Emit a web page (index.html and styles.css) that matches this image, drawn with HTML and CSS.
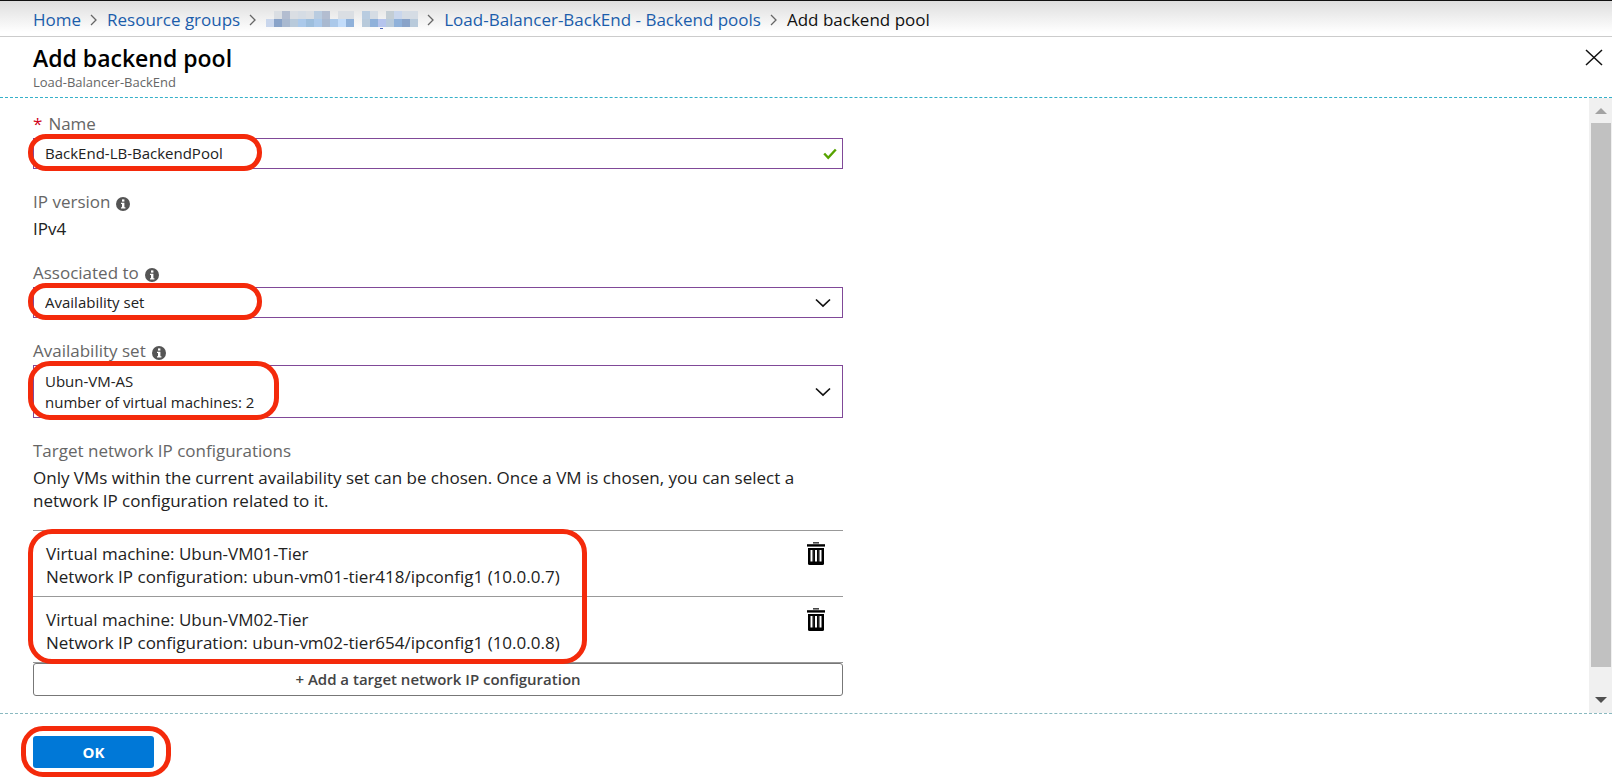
FILE: index.html
```html
<!DOCTYPE html>
<html lang="en">
<head>
<meta charset="utf-8">
<title>Add backend pool</title>
<link rel="stylesheet" href="styles.css">
</head>
<body>
<svg class="defs" aria-hidden="true">
  <symbol id="sep" viewBox="0 0 8 14"><path d="M1 2l5 5-5 5" fill="none" stroke="#666" stroke-width="1.3"/></symbol>
  <symbol id="info" viewBox="0 0 14 14"><circle cx="7" cy="7" r="7" fill="#555"/><rect x="6" y="2.4" width="2.4" height="2.2" fill="#fff"/><path d="M5 5.8h3.4v4.4h1v1.3H5v-1.3h1V7H5z" fill="#fff"/></symbol>
  <symbol id="down" viewBox="0 0 16 10"><path d="M1 1.5l7 6.5 7-6.5" fill="none" stroke="#111" stroke-width="1.7"/></symbol>
  <symbol id="trash" viewBox="0 0 18 23"><path d="M6 0h6v1.6H6z" fill="#444"/><path d="M0 2.2h18v2.4H0z"/><path d="M1 6h16v15.500q0 1.500-1.500 1.500h-13Q1 23 1 21.500z"/><path d="M3.500 8h2v11.500h-2zM8 8h2v11.500H8zM12.500 8h2v11.500h-2z" fill="#fff"/><path d="M6.700 8v11.500M11.300 8v11.500" stroke="#555" stroke-width=".5"/></symbol>
</svg>
<nav class="breadcrumb" aria-label="Breadcrumb">
  <a href="#">Home</a>
  <svg class="sep"><use href="#sep"/></svg>
  <a href="#">Resource groups</a>
  <svg class="sep"><use href="#sep"/></svg>
  <a href="#" class="redacted" aria-label="Redacted resource group">
    <svg width="152" height="18" viewBox="0 0 152 18" shape-rendering="crispEdges">
      <path fill="#dadee3" d="M8 0h8v8H8zM24 0h8v8h-8zM40 0h8v8h-8zM72 0h16v8H72z"/>
      <path fill="#b3bdd0" d="M16 0h8v8h-8zM56 0h8v8h-8z"/>
      <path fill="#d5dce4" d="M32 0h8v8h-8zM104 0h8v8h-8zM128 0h8v8h-8zM136 0h16v8h-16z"/>
      <path fill="#b9cce0" d="M48 0h8v8h-8zM96 0h8v8h-8z"/>
      <path fill="#c3cdd4" d="M120 0h8v8h-8z"/>
      <path fill="#c9d6ec" d="M0 8h8v8H0zM128 0h8v8h-8z"/>
      <path fill="#89a3c9" d="M8 8h8v8H8zM136 8h8v8h-8z"/>
      <path fill="#a9b9d0" d="M16 8h8v8h-8zM56 8h8v8h-8z"/>
      <path fill="#b8cadb" d="M24 8h8v8h-8zM96 8h8v8h-8zM120 8h8v8h-8zM144 8h8v8h-8z"/>
      <path fill="#abc9ea" d="M32 8h8v8h-8zM48 8h8v8h-8zM64 8h8v8h-8z"/>
      <path fill="#9dbedd" d="M40 8h8v8h-8z"/>
      <path fill="#c2dcfa" d="M72 8h8v8h-8z"/>
      <path fill="#8fb1da" d="M80 8h8v8h-8zM104 8h8v8h-8zM128 8h8v8h-8z"/>
      <path fill="#b5c4ed" d="M112 8h8v8h-8z"/>
      <path fill="#5068b8" d="M114 17h3v1h-3z"/>
    </svg>
  </a>
  <svg class="sep"><use href="#sep"/></svg>
  <a href="#">Load-Balancer-BackEnd - Backend pools</a>
  <svg class="sep"><use href="#sep"/></svg>
  <span aria-current="page">Add backend pool</span>
</nav>
<header class="head">
  <div>
    <h1>Add backend pool</h1>
    <p class="subtitle">Load-Balancer-BackEnd</p>
  </div>
  <button class="close" type="button" aria-label="Close"><svg width="18" height="17" viewBox="0 0 18 17"><path d="M1 1l16 15M17 1L1 16" stroke="#111" stroke-width="1.500"/></svg></button>
</header>
<main class="content">
  <form class="form" id="pool">
    <div class="field">
      <label for="name"><span class="required">*</span> Name</label>
      <div class="box marked">
        <input id="name" type="text" value="BackEnd-LB-BackendPool">
        <svg class="check" viewBox="0 0 14 12"><path d="M1.200 5.500l4 4.300L12.800 1.500" fill="none" stroke="#57a300" stroke-width="2.400"/></svg>
      </div>
    </div>
    <div class="field">
      <div class="label">IP version <svg class="info"><use href="#info"/></svg></div>
      <p class="value">IPv4</p>
    </div>
    <div class="field">
      <label for="assoc">Associated to <svg class="info"><use href="#info"/></svg></label>
      <div class="box marked">
        <select id="assoc"><option>Availability set</option></select>
        <svg class="down"><use href="#down"/></svg>
      </div>
    </div>
    <div class="field">
      <label for="avset">Availability set <svg class="info"><use href="#info"/></svg></label>
      <div class="box marked tall">
        <button id="avset" class="picker" type="button" aria-haspopup="listbox">Ubun-VM-AS<br>number of virtual machines: 2</button>
        <svg class="down"><use href="#down"/></svg>
      </div>
    </div>
    <section class="targets">
      <h2 class="label">Target network IP configurations</h2>
      <p class="hint">Only VMs within the current availability set can be chosen. Once a VM is chosen, you can select a network IP configuration related to it.</p>
      <ul class="list marked">
        <li>
          <p>Virtual machine: Ubun-VM01-Tier<br>Network IP configuration: ubun-vm01-tier418/ipconfig1 (10.0.0.7)</p>
          <button class="delete" type="button" aria-label="Delete Ubun-VM01-Tier"><svg width="18" height="23"><use href="#trash"/></svg></button>
        </li>
        <li>
          <p>Virtual machine: Ubun-VM02-Tier<br>Network IP configuration: ubun-vm02-tier654/ipconfig1 (10.0.0.8)</p>
          <button class="delete" type="button" aria-label="Delete Ubun-VM02-Tier"><svg width="18" height="23"><use href="#trash"/></svg></button>
        </li>
      </ul>
      <button class="add" type="button">+ Add a target network IP configuration</button>
    </section>
  </form>
  <div class="scrollbar" aria-hidden="true">
    <svg width="12" height="6"><path d="M0 6l6-6 6 6z" fill="#a3a3a3"/></svg>
    <div class="thumb"></div>
    <svg width="12" height="6"><path d="M0 0l6 6 6-6z" fill="#505050"/></svg>
  </div>
</main>
<footer class="foot">
  <div class="ok-wrap marked"><button class="ok" type="submit" form="pool">OK</button></div>
</footer>
</body>
</html>
```
FILE: styles.css
```css
*, *::after { box-sizing: border-box; }

body {
  margin: 0;
  min-height: 100vh;
  display: flex;
  flex-direction: column;
  background: #fff;
  color: #222;
  font: 17px/23px "Open Sans", "Noto Sans", sans-serif;
}

h1, h2, p, ul { margin: 0; padding: 0; font-weight: 400; }
button, input, select { font: inherit; color: inherit; }
button { cursor: pointer; }
.defs { display: none; }

.breadcrumb {
  display: flex;
  align-items: center;
  gap: 9px;
  height: 37px;
  padding: 2px 33px 0;
  border-top: 1px solid #111;
  border-bottom: 1px solid #ccc;
  background: linear-gradient(#dedede, #fff 90%);
  color: #111;
}
.breadcrumb a { color: #1b5dab; text-decoration: none; }
.sep { width: 8px; height: 14px; }
.redacted svg { display: block; }

.head {
  display: flex;
  justify-content: space-between;
  align-items: flex-start;
  height: 61px;
  padding: 8px 9px 0 33px;
  border-bottom: 1px dashed #35b0c9;
}
h1 { color: #000; font-size: 23px; font-weight: 600; line-height: 26px; }
.subtitle { color: #666; font-size: 13px; line-height: 22px; }
.close { display: flex; padding: 4px 0; border: 0; background: none; }

.content { flex: 1; display: flex; justify-content: space-between; }
.form { width: 843px; padding: 13px 0 17px 33px; }
.field { margin-bottom: 20px; }
label, .label { display: flex; align-items: center; gap: 6px; height: 27px; padding-bottom: 2px; color: #666; font-size: 17px; }
.required { color: #d0021b; }
.info { width: 14px; height: 14px; margin-top: 4px; }
.value { padding-top: 1px; }

.box { position: relative; display: flex; height: 31px; border: 1px solid #804998; }
.box.tall { height: 53px; }
.box input, .box select, .picker {
  appearance: none;
  width: 100%;
  padding: 0 40px 0 11px;
  border: 0;
  background: none;
  font-size: 15px;
  line-height: 21px;
  text-align: left;
}
.check, .down { position: absolute; top: 0; bottom: 0; margin: auto; }
.check { right: 5px; width: 14px; height: 12px; }
.down { right: 11px; width: 16px; height: 10px; }

/* Red highlight rings drawn over the important values */
.marked { position: relative; }
.marked::after {
  content: "";
  position: absolute;
  top: -5px;
  left: -6px;
  width: 234px;
  height: 37px;
  border: 5px solid #f42a0b;
  border-radius: 18px;
  pointer-events: none;
}
.tall::after { width: 251px; height: 59px; border-radius: 22px; }

.hint { max-width: 770px; padding: 1px 0 18px; }
.list { list-style: none; border-top: 1px solid #999; }
.list::after { top: -2px; left: -5px; width: 559px; height: 135px; border-radius: 24px; }
.list li {
  display: flex;
  justify-content: space-between;
  align-items: flex-start;
  height: 66px;
  padding: 11px 18px 0 13px;
  border-bottom: 1px solid #999;
}
.delete { display: flex; padding: 0; border: 0; background: none; }
.add {
  display: block;
  width: 100%;
  height: 33px;
  border: 1px solid #777;
  border-radius: 3px;
  background: #fff;
  color: #444;
  font-size: 15px;
  font-weight: 600;
}

.scrollbar {
  display: flex;
  flex-direction: column;
  align-items: center;
  gap: 9px;
  width: 23px;
  padding: 10px 1px 10px 2px;
  background: #f0f0f0;
}
.thumb { flex: 1; align-self: stretch; margin-bottom: 21px; background: #c1c1c1; }

.foot { display: flex; height: 72px; padding: 22px 33px 0; border-top: 1px dashed #8ab9c0; }
.ok-wrap { width: 121px; height: 32px; }
.ok-wrap::after { top: -10px; left: -12px; width: 150px; height: 51px; border-radius: 22px; }
.ok { width: 100%; height: 32px; border: 0; border-radius: 3px; background: #0078d7; color: #fff; font-size: 15px; font-weight: 700; }
```
